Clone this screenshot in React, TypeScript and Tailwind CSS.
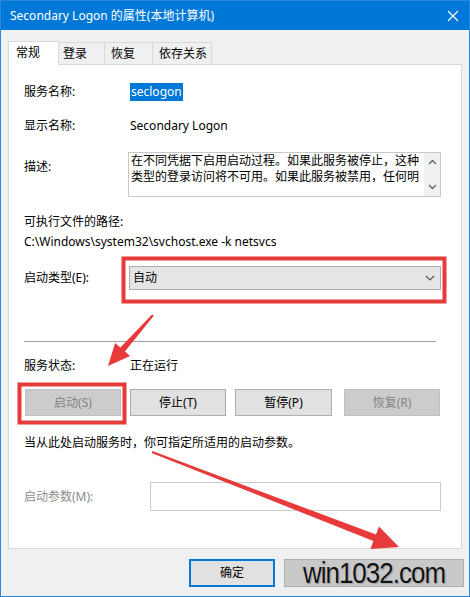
import React from "react";

const F = "font-['Noto_Sans','Noto_Sans_CJK_SC',sans-serif]";

function Row({ label, children, className = "" }: { label: React.ReactNode; children?: React.ReactNode; className?: string }) {
  return (
    <div className={`flex items-center h-[18px] ${className}`}>
      <div className="w-[106px] shrink-0">{label}</div>
      {children}
    </div>
  );
}

export default function App() {
  return (
    <div className={`relative w-[470px] h-[597px] overflow-hidden border border-[#2a86d8] bg-[#f0f0f0] text-[12px] leading-[18px] text-black ${F}`}>
      {/* Title bar */}
      <div className="h-[29px] bg-[#0078d7] flex items-center justify-between pl-[9px] pr-[8px] text-white">
        <span className="text-[12px]">Secondary Logon 的属性(本地计算机)</span>
        <svg width="12" height="12" viewBox="0 0 12 12" className="mr-[2px]">
          <path d="M1 1 L11 11 M11 1 L1 11" stroke="white" strokeWidth="1.2" fill="none" />
        </svg>
      </div>

      {/* Tabs */}
      <div className="flex items-end h-[34px] pl-[7px]">
        <div className="w-[51px] h-[24px] bg-white border border-[#d9d9d9] border-b-0 pl-[7px] flex items-center relative z-10 -mb-px pb-[2px]">常规</div>
        <div className="w-[46px] h-[22px] bg-[#f0f0f0] border border-[#d9d9d9] border-l-0 border-b-0 flex items-center pl-[4px]">登录</div>
        <div className="w-[48px] h-[22px] bg-[#f0f0f0] border border-[#d9d9d9] border-l-0 border-b-0 flex items-center pl-[6px]">恢复</div>
        <div className="w-[59px] h-[22px] bg-[#f0f0f0] border border-[#d9d9d9] border-l-0 border-b-0 flex items-center pl-[6px]">依存关系</div>
      </div>

      {/* Panel */}
      <div className="ml-[7px] w-[454px] h-[485px] bg-white border border-[#d9d9d9] pl-[15px] pt-[18px]">
        <Row label="服务名称:">
          <span className="bg-[#0078d7] text-white px-[1px] h-[18px] leading-[18px]">seclogon</span>
        </Row>
        <Row label="显示名称:" className="mt-[16px]">
          <span>Secondary Logon</span>
        </Row>

        <div className="flex mt-[17px]">
          <div className="w-[104px] shrink-0 mt-[6px]">描述:</div>
          <div className="w-[313px] h-[45px] border border-[#c8c8c8] flex">
            <div className="flex-1 pl-[2px] overflow-hidden">
              <div className="h-[16px] leading-[16px]">在不同凭据下启用启动过程。如果此服务被停止，这种</div>
              <div className="h-[16px] leading-[16px]">类型的登录访问将不可用。如果此服务被禁用，任何明</div>
            </div>
            <div className="w-[16px] bg-[#f0f0f0] flex flex-col items-center justify-between py-[6px]">
              <svg width="9" height="6" viewBox="0 0 9 6"><path d="M1 5 L4.5 1.5 L8 5" stroke="#606060" strokeWidth="1.3" fill="none" /></svg>
              <svg width="9" height="6" viewBox="0 0 9 6"><path d="M1 1 L4.5 4.5 L8 1" stroke="#606060" strokeWidth="1.3" fill="none" /></svg>
            </div>
          </div>
        </div>

        <div className="mt-[16px] h-[18px]">可执行文件的路径:</div>
        <div className="mt-[2px] h-[18px]">C:\Windows\system32\svchost.exe -k netsvcs</div>

        <div className="flex items-center mt-[15px] h-[24px]">
          <div className="w-[105px] shrink-0">启动类型(E):</div>
          <div className="w-[312px] h-[24px] bg-[#e5e5e5] border border-[#adadad] flex items-center justify-between pl-[3px] pr-[5px]">
            <span>自动</span>
            <svg width="10" height="6" viewBox="0 0 10 6"><path d="M1 1 L5 5 L9 1" stroke="#505050" strokeWidth="1.1" fill="none" /></svg>
          </div>
        </div>

        <div className="mt-[51px] w-[412px] h-px bg-[#a0a0a0]" />

        <Row label="服务状态:" className="mt-[15px]">
          <span>正在运行</span>
        </Row>

        <div className="flex mt-[14px] h-[27px] pl-[1px]">
          <div className="w-[96px] h-[27px] bg-[#cccccc] border border-[#bfbfbf] text-[#838383] flex items-center justify-center">启动(S)</div>
          <div className="ml-[9px] w-[96px] h-[27px] bg-[#e1e1e1] border border-[#adadad] flex items-center justify-center">停止(T)</div>
          <div className="ml-[9px] w-[97px] h-[27px] bg-[#e1e1e1] border border-[#adadad] flex items-center justify-center">暂停(P)</div>
          <div className="ml-[12px] w-[96px] h-[27px] bg-[#cccccc] border border-[#bfbfbf] text-[#838383] flex items-center justify-center">恢复(R)</div>
        </div>

        <div className="mt-[18px] h-[18px]">当从此处启动服务时，你可指定所适用的启动参数。</div>

        <div className="flex items-center mt-[30px] h-[29px]">
          <div className="w-[126px] shrink-0 text-[#8c8c8c]">启动参数(M):</div>
          <div className="w-[291px] h-[29px] border border-[#cccccc] bg-white" />
        </div>
      </div>

      {/* Bottom buttons */}
      <div className="flex mt-[10px] h-[28px] pl-[188px]">
        <div className="w-[86px] h-[28px] bg-[#e1e1e1] border-2 border-[#0078d7] flex items-center justify-center">确定</div>
        <div className="ml-[9px] w-[180px] h-[28px] bg-[#c9c9c9] border border-[#adadad] flex items-center justify-center">
          <span
            className="inline-block scale-y-[1.15] font-['Liberation_Sans',sans-serif] text-[26px] leading-[26px] tracking-[-1px] text-[#111] [text-shadow:0_0_2px_#ffffff,0_0_2px_#8a8a8a,1px_1px_1px_#8a8a8a]"
          >
            win1032.com
          </span>
        </div>
      </div>

      {/* Annotations overlay */}
      <svg className="absolute left-[-1px] top-[-1px] pointer-events-none" width="470" height="597" viewBox="0 0 470 597">
        <rect x="123.5" y="258.5" width="321" height="43" fill="none" stroke="#e53b3b" strokeWidth="4" />
        <rect x="19.5" y="384.5" width="105" height="38" fill="none" stroke="#e53b3b" strokeWidth="4" />
        <polygon
          points="152.25,314.34 120.4,347.5 115.1,342.9 108,366 130.1,356.1 124.9,351.5 153.75,315.66"
          fill="#e83a3a"
        />
        <polygon
          points="152.4,451.1 376.0,534.4 379.0,526.5 399,547 370.4,548.9 373.4,541.0 151.6,452.9"
          fill="#e83a3a"
        />
      </svg>
    </div>
  );
}
